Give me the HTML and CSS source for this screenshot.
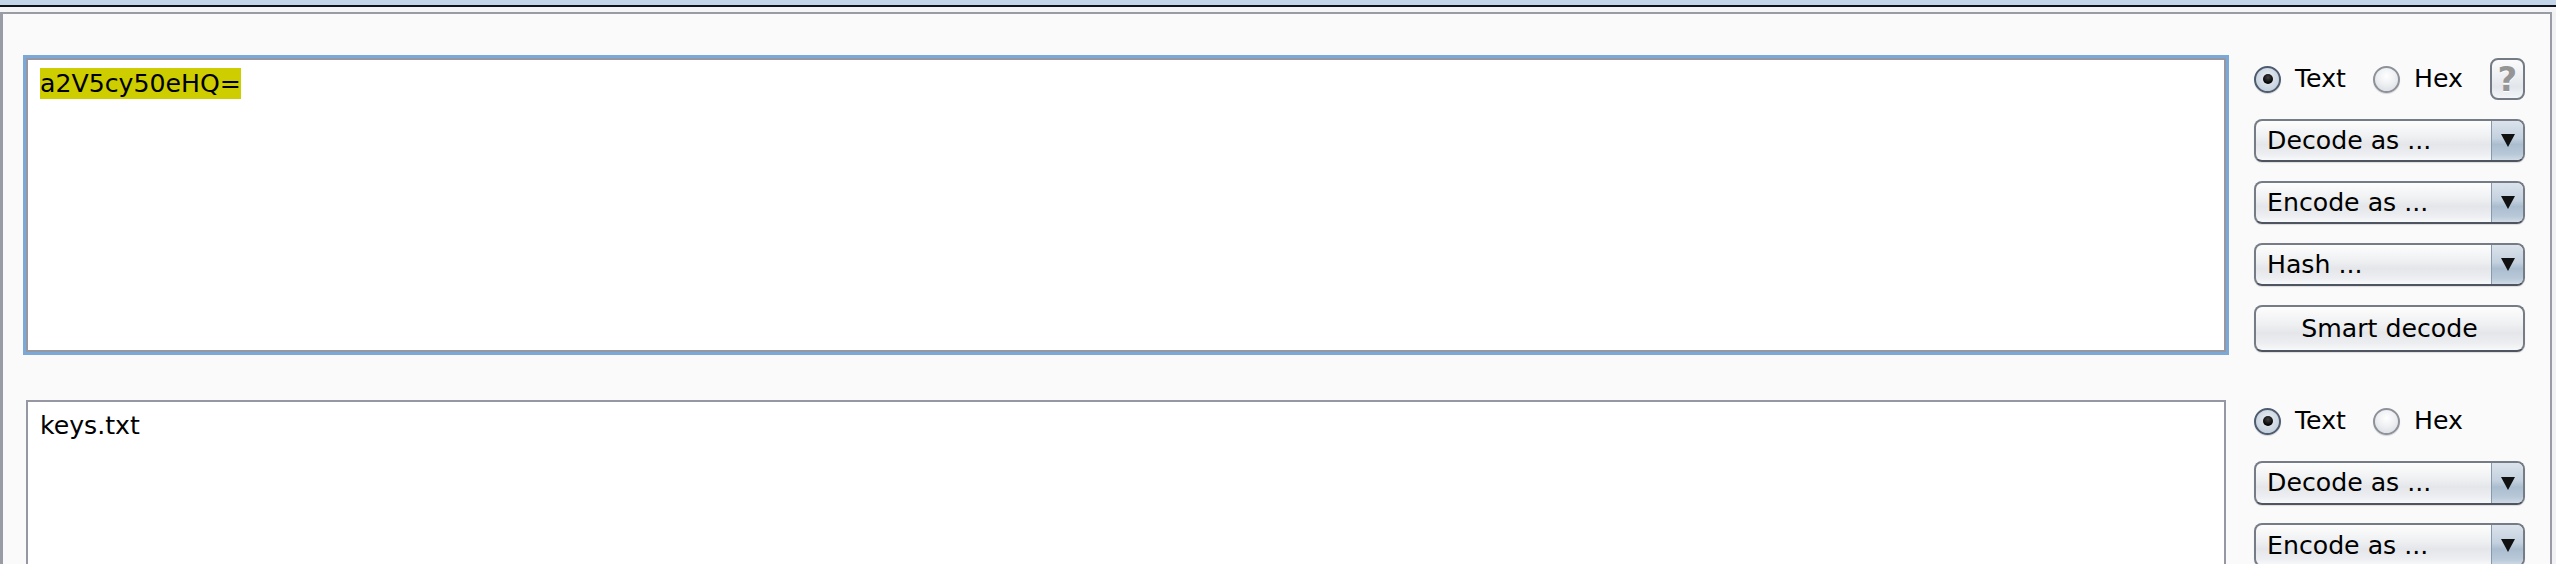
FILE: index.html
```html
<!DOCTYPE html>
<html>
<head>
<meta charset="utf-8">
<link rel="stylesheet" href="styles.css">
</head>
<body>
<div class="topbar"><div class="tb-blue"></div><div class="tb-dark"></div><div class="tb-light"></div></div>
<div class="panel">
  <div class="row">
    <div class="editor focused"><span class="sel">a2V5cy50eHQ=</span></div>
    <div class="controls">
      <div class="radios">
        <label class="opt"><span class="radio on"></span>Text</label>
        <label class="opt"><span class="radio"></span>Hex</label>
        <span class="help">?</span>
      </div>
      <div class="combo"><span class="combo-label">Decode as ...</span><span class="arrow"><span class="tri"></span></span></div>
      <div class="combo"><span class="combo-label">Encode as ...</span><span class="arrow"><span class="tri"></span></span></div>
      <div class="combo"><span class="combo-label">Hash ...</span><span class="arrow"><span class="tri"></span></span></div>
      <div class="button">Smart decode</div>
    </div>
  </div>
  <div class="row second">
    <div class="editor">keys.txt</div>
    <div class="controls">
      <div class="radios">
        <label class="opt"><span class="radio on"></span>Text</label>
        <label class="opt"><span class="radio"></span>Hex</label>
      </div>
      <div class="combo"><span class="combo-label">Decode as ...</span><span class="arrow"><span class="tri"></span></span></div>
      <div class="combo"><span class="combo-label">Encode as ...</span><span class="arrow"><span class="tri"></span></span></div>
    </div>
  </div>
</div>
</body>
</html>
```

FILE: styles.css
```css
html, body {
  margin: 0;
  padding: 0;
  width: 2556px;
  height: 564px;
  overflow: hidden;
  background: #f2f2f4;
  font-family: "DejaVu Sans", "Noto Sans", sans-serif;
  font-size: 25.2px;
  color: #000;
}

.topbar {
  height: 12px;
  display: flex;
  flex-direction: column;
}
.tb-blue { height: 5px; background: #c3d4e8; }
.tb-dark { height: 2px; background: #0f121a; }
.tb-light { height: 5px; background: #f4f4f6; }

.panel {
  width: 2552px;
  height: 700px;
  border-top: 2px solid #9a9ca5;
  border-left: 3px solid #9a9ca5;
  border-right: 2px solid #9a9ca5;
  background: #fafafa;
  padding: 44px 25px 0 23px;
  box-sizing: border-box;
}

.row {
  display: flex;
  gap: 28px;
  height: 294px;
}
.row.second {
  margin-top: 48px;
}

.editor {
  flex: 1;
  background: #fff;
  border: 2px solid #9598a2;
  padding: 8px 12px;
  line-height: 31px;
  box-sizing: border-box;
}
.editor.focused {
  box-shadow: 0 0 0 3px #7ca8d8;
}
.sel {
  background: #cdcd00;
  display: inline-block;
  line-height: 31px;
}

.controls {
  width: 271px;
  flex: none;
  display: flex;
  flex-direction: column;
  gap: 18.5px;
}

.radios {
  height: 42px;
  display: flex;
  align-items: center;
}
.opt {
  display: flex;
  align-items: center;
  gap: 14px;
  margin-right: 27px;
  line-height: 1;
}
.radio {
  width: 27px;
  height: 27px;
  border-radius: 50%;
  box-sizing: border-box;
  border: 2px solid #8d9199;
  background: radial-gradient(circle at 50% 35%, #ffffff 0%, #eef0f3 45%, #d6d9de 100%);
  box-shadow: 0 1px 1px rgba(0,0,0,0.15);
  position: relative;
  flex: none;
}
.radio.on {
  border-color: #4c5b6e;
  background: radial-gradient(circle at 50% 40%, #e9eef4 0%, #c7d2de 70%, #aebccc 100%);
}
.radio.on::after {
  content: "";
  position: absolute;
  left: 50%;
  top: 50%;
  width: 10px;
  height: 10px;
  margin: -5px 0 0 -5px;
  border-radius: 50%;
  background: radial-gradient(circle at 50% 35%, #444 0%, #000 70%);
}
.help {
  margin-left: auto;
  width: 41px;
  height: 42px;
  box-sizing: border-box;
  border: 2px solid #757b84;
  border-radius: 8px;
  background: linear-gradient(#fbfbfc, #eceef1 45%, #e2e5ea 70%, #f3f5f8);
  color: #959595;
  font-family: "DejaVu Sans", sans-serif;
  font-weight: bold;
  font-size: 34px;
  line-height: 38px;
  text-align: center;
  text-shadow: 0 1px 0 #fff;
}

.combo, .button {
  height: 44px;
  box-sizing: border-box;
  border: 2px solid #767c86;
  border-bottom-color: #4f5560;
  border-radius: 8px;
  background: linear-gradient(#fdfdfd 0%, #eff0f2 40%, #e4e6e9 60%, #eceef1 85%, #f8f9fa 100%);
  box-shadow: 0 1px 1px rgba(0,0,0,0.12);
  display: flex;
  align-items: center;
  overflow: hidden;
}
.combo-label {
  flex: 1;
  padding-left: 11px;
}
.arrow {
  width: 31px;
  align-self: stretch;
  border-left: 1px solid #8799ad;
  background: linear-gradient(#dbe3ec 0%, #c3d0de 45%, #aabdcf 60%, #b8c8d8 85%, #cfdae5 100%);
  display: flex;
  align-items: center;
  justify-content: center;
}
.tri {
  width: 0;
  height: 0;
  border-left: 7px solid transparent;
  border-right: 7px solid transparent;
  border-top: 13px solid #111;
  margin-top: 1px;
}
.button {
  height: 48px;
  justify-content: center;
}
```
